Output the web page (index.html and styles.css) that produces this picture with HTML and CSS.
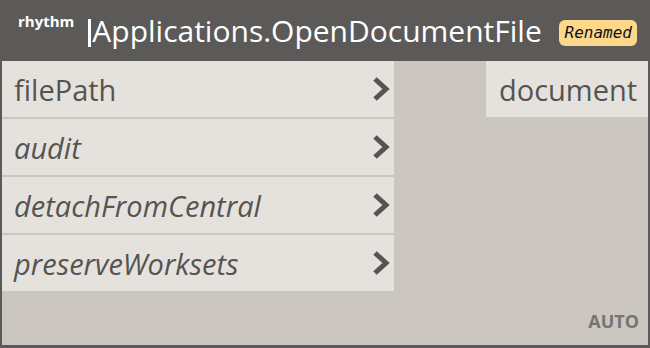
FILE: index.html
```html
<!DOCTYPE html>
<html lang="en">
<head>
    <meta charset="UTF-8">
    <meta name="viewport" content="width=device-width, initial-scale=1.0">
    <link rel="stylesheet" href="styles.css">
</head>
<body>
    <div class="node">
        <div class="node-header">
            <span class="package">rhythm</span>
            <span class="divider"></span>
            <span class="node-title">Applications.OpenDocumentFile</span>
            <span class="badge">Renamed</span>
        </div>
        <div class="node-body">
            <div class="ports">
                <div class="inputs">
                    <div class="port">
                        <span class="port-name">filePath</span>
                        <svg class="chevron" width="18" height="26" viewBox="0 0 18 26"><polyline points="3,3 14,13 3,23" /></svg>
                    </div>
                    <div class="port">
                        <span class="port-name optional">audit</span>
                        <svg class="chevron" width="18" height="26" viewBox="0 0 18 26"><polyline points="3,3 14,13 3,23" /></svg>
                    </div>
                    <div class="port">
                        <span class="port-name optional">detachFromCentral</span>
                        <svg class="chevron" width="18" height="26" viewBox="0 0 18 26"><polyline points="3,3 14,13 3,23" /></svg>
                    </div>
                    <div class="port">
                        <span class="port-name optional">preserveWorksets</span>
                        <svg class="chevron" width="18" height="26" viewBox="0 0 18 26"><polyline points="3,3 14,13 3,23" /></svg>
                    </div>
                </div>
                <div class="outputs">
                    <div class="port output">
                        <span class="port-name">document</span>
                    </div>
                </div>
            </div>
            <div class="lacing">AUTO</div>
        </div>
    </div>
</body>
</html>
```

FILE: styles.css
```css
body {
    margin: 0;
    font-family: "Open Sans", "Noto Sans", sans-serif;
    background: #ffffff;
}

/* Node frame */
.node {
    width: 650px;
    height: 348px;
    box-sizing: border-box;
    display: flex;
    flex-direction: column;
    background: #cbc7c0;
    border: 2px solid #5b5a58;
    border-top: none;
    border-bottom-width: 3px;
}

/* Header */
.node-header {
    display: flex;
    align-items: center;
    height: 61px;
    margin: 0 -2px;
    padding: 0 13px 0 18px;
    background: #5b5a58;
    color: #ffffff;
}

.package {
    font-size: 15px;
    font-weight: bold;
    align-self: flex-start;
    margin-top: 11px;
}

.divider {
    width: 3px;
    height: 28px;
    background: #ffffff;
    margin: 4px 1px 0 14px;
}

.node-title {
    font-size: 30px;
    line-height: 1;
}

.badge {
    margin-left: auto;
    margin-top: 5px;
    padding: 3px 5px 4px 6px;
    background: #fdd88a;
    border-radius: 6px;
    color: #111111;
    font-family: "DejaVu Sans Mono", monospace;
    font-style: italic;
    font-size: 16px;
}

/* Body */
.node-body {
    flex: 1;
    display: flex;
    flex-direction: column;
}

.ports {
    display: flex;
    justify-content: space-between;
}

.inputs {
    width: 392px;
    display: flex;
    flex-direction: column;
    gap: 2px;
}

.port {
    height: 56px;
    display: flex;
    align-items: center;
    justify-content: space-between;
    padding: 0 4px 0 12px;
    background: #e5e2dd;
}

.port-name {
    font-size: 29px;
    color: #555452;
}

.port-name.optional {
    font-style: italic;
}

.chevron polyline {
    fill: none;
    stroke: #555452;
    stroke-width: 5;
    stroke-linejoin: miter;
}

.output {
    width: 162px;
    box-sizing: border-box;
    padding: 0 11px 0 13px;
}

.lacing {
    margin-top: auto;
    align-self: flex-end;
    padding: 0 9px 12px 0;
    font-size: 18px;
    font-weight: bold;
    color: #767470;
}
```
